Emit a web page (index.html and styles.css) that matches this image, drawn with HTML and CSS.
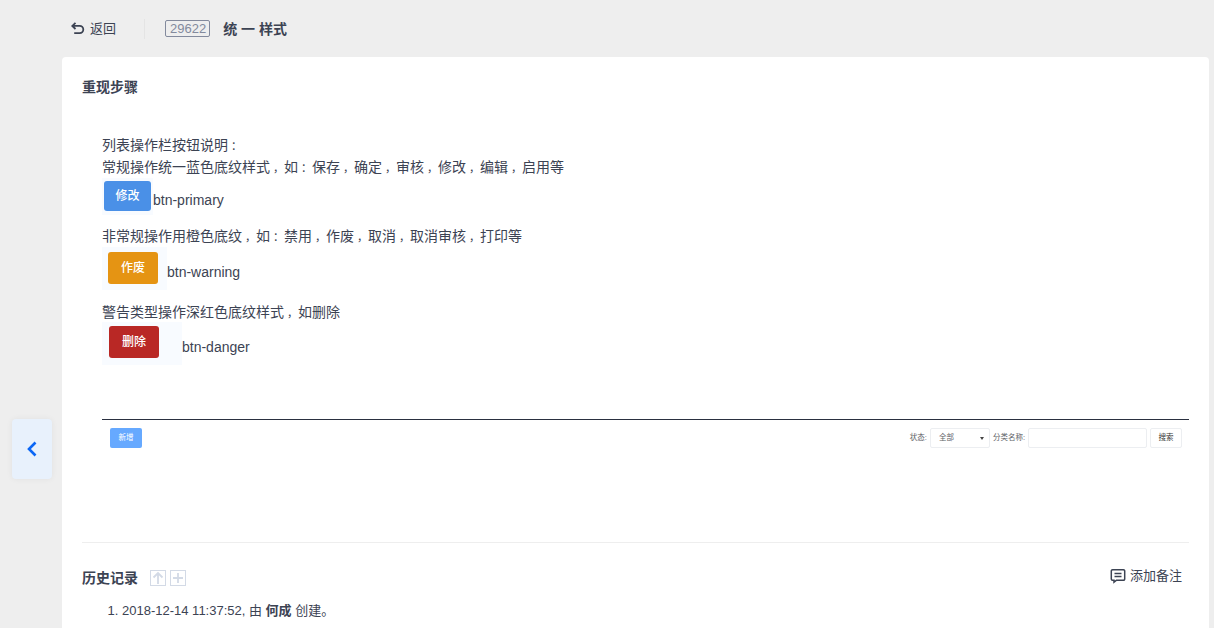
FILE: index.html
```
<!DOCTYPE html>
<html lang="zh-CN">
<head>
<meta charset="utf-8">
<title>统一样式</title>
<link rel="stylesheet" href="styles.css">
</head>
<body>
<a class="side-nav" href="#"><svg width="12" height="18" viewBox="0 0 12 18"><path d="M9.500 2.500 3 9l6.500 6.500" fill="none" stroke="#0a66f5" stroke-width="2.600"/></svg></a>
<main class="page">
  <header class="topbar">
    <a class="back" href="#"><svg width="16" height="16" viewBox="0 0 16 16"><path d="M5.500 1.800 2.300 4.900l3.200 3.100M2.600 4.900h7.100a3.500 3.500 0 0 1 0 7.200H4.200" fill="none" stroke="#3c4353" stroke-width="1.800"/></svg><span>返回</span></a>
    <span class="sep"></span>
    <span class="id-badge">29622</span>
    <strong class="bug-title">统 一 样式</strong>
  </header>
  <section class="card">
    <h2 class="section-title">重现步骤</h2>
    <div class="content">
      <p class="line">列表操作栏按钮说明<span class="pn">：</span></p>
      <p class="line">常规操作统一蓝色底纹样式<span class="pn">，</span>如<span class="pn">：</span>保存<span class="pn">，</span>确定<span class="pn">，</span>审核<span class="pn">，</span>修改<span class="pn">，</span>编辑<span class="pn">，</span>启用等</p>
      <div class="shot-row primary-row">
        <span class="shot shot-primary"><span class="btn btn-primary">修改</span></span>
        <span class="shot-label">btn-primary</span>
      </div>
      <p class="line para">非常规操作用橙色底纹<span class="pn">，</span>如<span class="pn">：</span>禁用<span class="pn">，</span>作废<span class="pn">，</span>取消<span class="pn">，</span>取消审核<span class="pn">，</span>打印等</p>
      <div class="shot-row warning-row">
        <span class="shot shot-warning"><span class="btn btn-warning">作废</span></span>
        <span class="shot-label">btn-warning</span>
      </div>
      <p class="line para-danger">警告类型操作深红色底纹样式<span class="pn">，</span>如删除</p>
      <div class="shot-row danger-row">
        <span class="shot shot-danger"><span class="btn btn-danger">删除</span></span>
        <span class="shot-label">btn-danger</span>
      </div>
      <div class="mini-shot">
        <span class="mini-add">新增</span>
        <div class="mini-filter">
          <span>状态:</span>
          <span class="mini-select"><span>全部</span><i class="caret"></i></span>
          <span class="mini-name">分类名称:</span>
          <span class="mini-input"></span>
          <span class="mini-search">搜索</span>
        </div>
      </div>
    </div>
    <div class="history">
      <div class="history-head">
        <h2 class="section-title">历史记录</h2>
        <span class="icon-btn"><svg width="14" height="14" viewBox="0 0 14 14"><path d="M7 13V2M2.500 6.500 7 2l4.500 4.500" fill="none" stroke="#d3dae6" stroke-width="1.800"/></svg></span>
        <span class="icon-btn"><svg width="14" height="14" viewBox="0 0 14 14"><path d="M7 2v10M2 7h10" fill="none" stroke="#d3dae6" stroke-width="1.800"/></svg></span>
        <a class="add-note" href="#"><svg width="16" height="16" viewBox="0 0 16 16"><path d="M2.500 1.800h11a1.200 1.200 0 0 1 1.200 1.200v8a1.200 1.200 0 0 1-1.200 1.200H6.500l-2.500 2v-2H2.500A1.200 1.200 0 0 1 1.300 11V3a1.200 1.200 0 0 1 1.200-1.200ZM4.500 5.500h7M4.500 8.500h7" fill="none" stroke="#3c4353" stroke-width="1.500"/></svg><span>添加备注</span></a>
      </div>
      <ol class="history-list">
        <li>2018-12-14 11:37:52, 由 <strong>何成</strong> 创建。</li>
      </ol>
    </div>
  </section>
</main>
</body>
</html>
```
FILE: styles.css
```
* { box-sizing: border-box; }
html, body { height: 100%; }
body {
  margin: 0;
  height: 628px;
  overflow: hidden;
  background: #eeeeee;
  color: #3c4353;
  font: 14px/20px "Liberation Sans", "Noto Sans CJK SC", sans-serif;
  position: relative;
}
a { color: inherit; text-decoration: none; }
p, h2, ol { margin: 0; padding: 0; }

.page { padding: 0 5px 0 62px; }

.topbar { height: 57px; display: flex; align-items: center; padding: 0 0 0 8px; }
.back { display: flex; align-items: center; gap: 4px; font-size: 13px; }
.sep { width: 1px; height: 20px; background: #e4e4e4; margin: 0 20px 0 28px; }
.id-badge {
  border: 1px solid #838a9d;
  border-radius: 2px;
  color: #838a9d;
  font-size: 13px;
  line-height: 15px;
  height: 17px;
  padding: 0 3px 0 4px;
}
.bug-title { margin-left: 13px; font-size: 14px; }

.card {
  background: #fff;
  border-radius: 4px 4px 0 0;
  padding: 20px 20px 0;
  height: 600px;
}
.section-title { font-size: 14px; font-weight: 700; line-height: 20px; }

.content { padding: 37px 0 0 20px; height: 446px; border-bottom: 1px solid #eeeeee; }
.line { line-height: 22px; }
.pn { font-size: 11px; line-height: 1; padding-left: 3px; }

.shot-row { display: flex; align-items: center; }
.shot { display: flex; background: #f8fbff; }
.shot-primary { width: 51px; height: 37px; padding: 3px 0 0 2px; }
.shot-warning { width: 65px; height: 43px; padding: 5px 0 0 6px; }
.shot-danger { width: 80px; height: 43px; padding: 4px 0 0 7px; }
.danger-row { margin-top: -1px; }
.primary-row .shot-label { margin-top: 6px; }
.warning-row .shot-label { margin-top: 6px; }
.danger-row .shot-label { margin-top: 7px; }
.para { margin-top: 10px; }
.para-danger { margin-top: 11px; }

.btn {
  display: flex;
  align-items: center;
  justify-content: center;
  color: #fff;
  border-radius: 3px;
  font-size: 12px;
  font-weight: 500;
}
.btn-primary { width: 47px; height: 30px; background: #4a90e7; }
.btn-warning { width: 50px; height: 32px; background: #e59413; }
.btn-danger { width: 50px; height: 32px; background: #b92825; }

.mini-shot {
  margin-top: 54px;
  border-top: 1px solid #2a3040;
  display: flex;
  justify-content: space-between;
  align-items: center;
  height: 37px;
  padding: 0 7px 0 8px;
  font-size: 7.500px;
  line-height: 10px;
  color: #606266;
}
.mini-add {
  width: 32px;
  height: 20px;
  background: #66a9ff;
  color: #fff;
  border-radius: 2px;
  display: flex;
  align-items: center;
  justify-content: center;
}
.mini-filter { display: flex; align-items: center; gap: 3px; }
.mini-select, .mini-input, .mini-search {
  height: 20px;
  border: 1px solid #eceef1;
  border-radius: 2px;
  background: #fff;
  display: flex;
  align-items: center;
}
.mini-select { width: 60px; padding: 0 5px 0 8px; justify-content: space-between; }
.caret { border: 2px solid transparent; border-top: 3px solid #444; border-bottom: 0; }
.mini-input { width: 119px; }
.mini-search { width: 32px; justify-content: center; color: #333; }

.history { padding-top: 25px; position: relative; }
.history-head { display: flex; align-items: center; gap: 4px; height: 20px; }
.history-head .section-title { margin-right: 8px; }
.icon-btn {
  width: 16px;
  height: 16px;
  border: 1px solid #d3dae6;
  background: #fff;
  display: flex;
  align-items: center;
  justify-content: center;
}
.add-note { margin-left: auto; margin-right: 7px; margin-top: -4px; display: flex; align-items: center; gap: 4px; font-size: 13px; }
.history-list { margin-top: 13px; padding-left: 40px; list-style: decimal; font-size: 13px; }

.side-nav {
  position: absolute;
  left: 12px;
  top: 419px;
  width: 40px;
  height: 60px;
  background: #e8f1fc;
  border-radius: 4px;
  box-shadow: 0 0 6px rgba(0, 0, 0, 0.06);
  display: flex;
  align-items: center;
  justify-content: center;
}
```
